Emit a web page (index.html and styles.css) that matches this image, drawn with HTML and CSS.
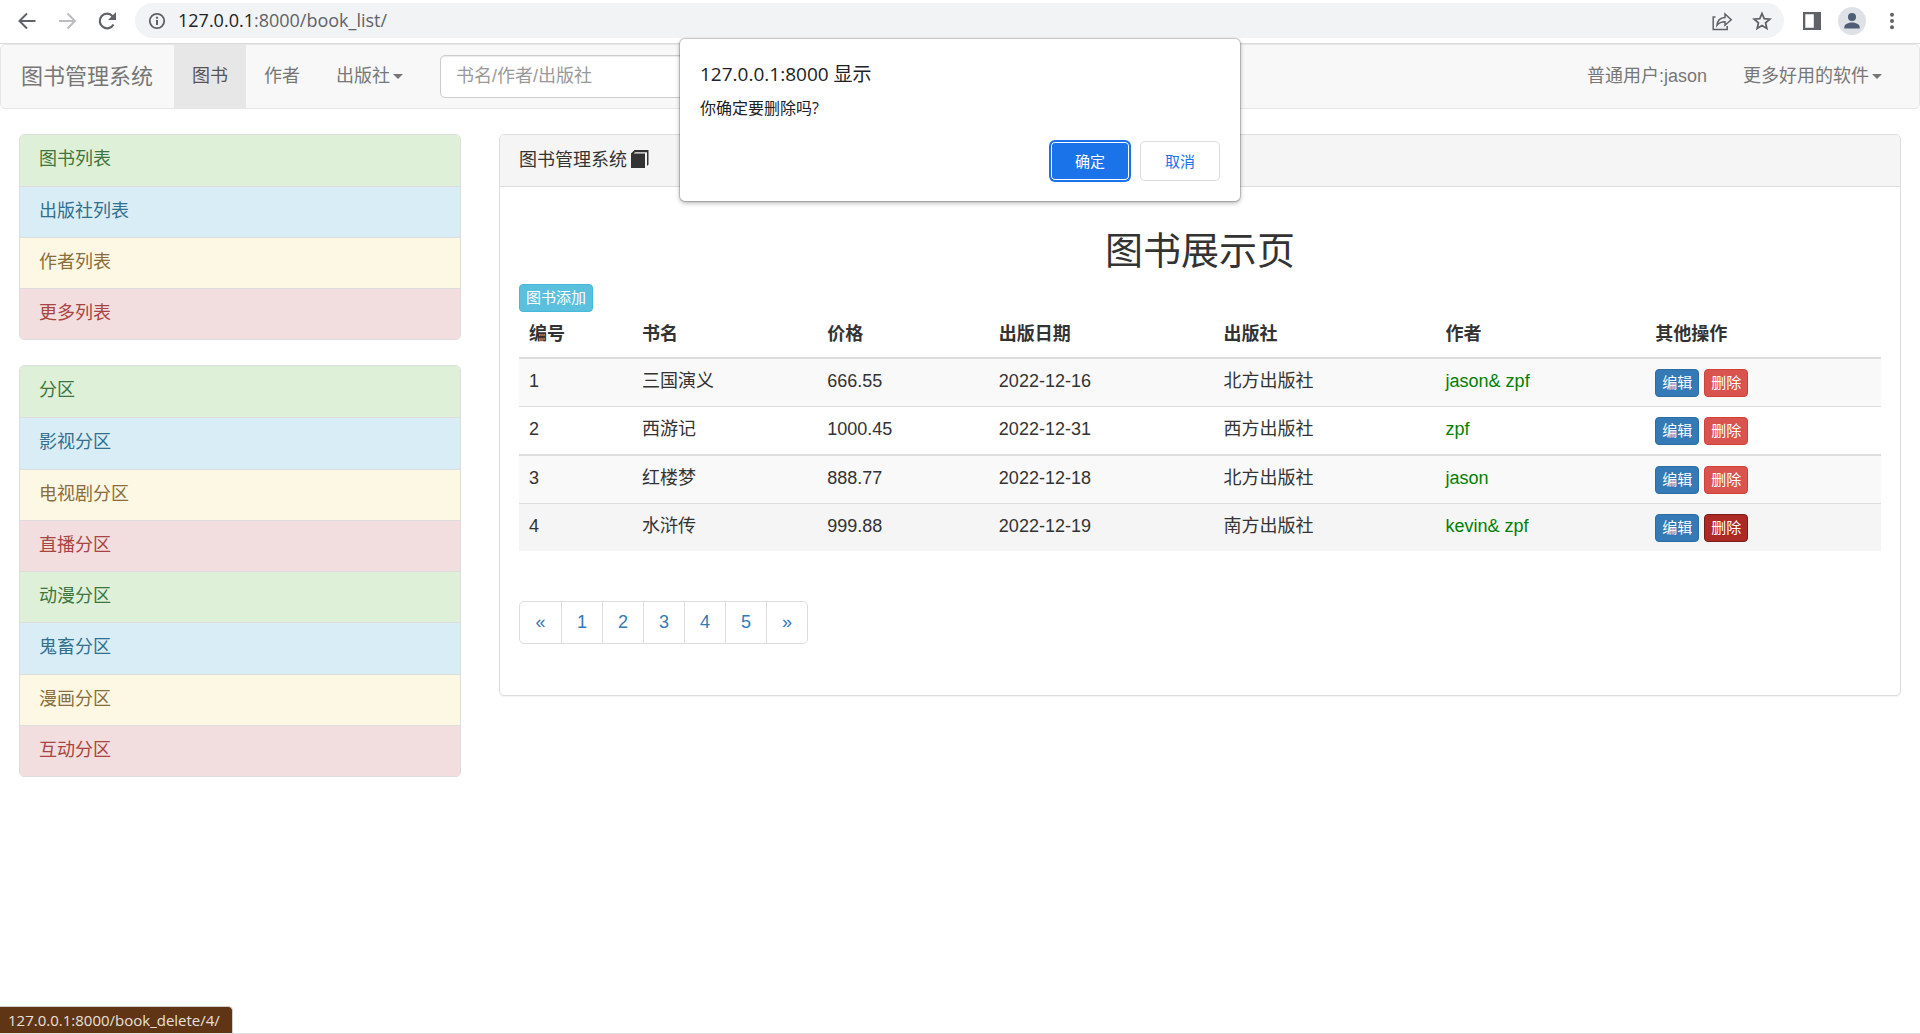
FILE: index.html
```html
<!DOCTYPE html>
<html lang="zh-CN">
<head>
<meta charset="utf-8">
<title>图书管理系统</title>
<link rel="stylesheet" href="styles.css">
</head>
<body>
<header class="toolbar">
  <button class="tool" aria-label="后退"><svg width="24" height="24" viewBox="0 0 24 24" fill="none" stroke="#5f6368" stroke-width="2"><path d="M20.500 12H5M12 4.500L4.500 12l7.500 7.500"/></svg></button>
  <button class="tool" aria-label="前进"><svg width="24" height="24" viewBox="0 0 24 24" fill="none" stroke="#babcbe" stroke-width="2"><path d="M4 12h15.500M12.500 4.500L20 12l-7.500 7.500"/></svg></button>
  <button class="tool" aria-label="刷新"><svg width="24" height="24" viewBox="0 0 24 24"><path d="M18.500 15.500A7.300 7.300 0 1 1 17.600 7.200" fill="none" stroke="#5f6368" stroke-width="2.200"/><path d="M21 3v8h-8z" fill="#5f6368"/></svg></button>
  <div class="omnibox">
    <svg width="18" height="18" viewBox="0 0 18 18"><circle cx="9" cy="9" r="7.200" fill="none" stroke="#5f6368" stroke-width="1.800"/><path d="M8 8h2v5H8zM8 4.800h2v2H8z" fill="#5f6368"/></svg>
    <span class="url"><span class="url-host">127.0.0.1</span>:8000/book_list/</span>
    <button class="tool" aria-label="分享"><svg width="24" height="24" viewBox="0 0 24 24" fill="none" stroke="#5f6368" stroke-width="1.500"><path d="M5.500 8H3.200v12.500h14V17"/><path d="M7 16.200c.5-5 3.200-7.400 8-7.700V5l6.200 5.800L15 16.200v-3.500c-3.500 0-6 1-8 3.500z"/></svg></button>
    <button class="tool" aria-label="收藏"><svg width="24" height="24" viewBox="0 0 24 24" fill="none" stroke="#5f6368" stroke-width="1.800"><path d="M12 4.500l2.200 5.200 5.600.5-4.200 3.700 1.200 5.500L12 16.500l-4.800 2.900 1.200-5.500-4.200-3.700 5.600-.5z"/></svg></button>
  </div>
  <div class="tools-end">
    <button class="tool" aria-label="侧边栏"><svg width="24" height="24" viewBox="0 0 24 24"><path d="M3 3h18v18H3zM5.300 5.300v13.400h8.500V5.300z" fill="#5f6368" fill-rule="evenodd"/></svg></button>
    <button class="tool" aria-label="用户"><svg width="28" height="28" viewBox="0 0 28 28"><circle cx="14" cy="14" r="14" fill="#dee1e6"/><circle cx="14" cy="10" r="4" fill="#4f5d75"/><path d="M6.300 21.500v-1.500c0-3 4.500-4.500 7.700-4.500s7.700 1.500 7.700 4.500v1.500z" fill="#4f5d75"/></svg></button>
    <button class="tool" aria-label="菜单"><svg width="24" height="24" viewBox="0 0 24 24" fill="#5f6368"><circle cx="12" cy="5.700" r="2"/><circle cx="12" cy="12" r="2"/><circle cx="12" cy="18.200" r="2"/></svg></button>
  </div>
</header>

<nav class="navbar">
  <a class="brand" href="#">图书管理系统</a>
  <a class="nav-link active" href="#">图书</a>
  <a class="nav-link" href="#">作者</a>
  <a class="nav-link" href="#">出版社<span class="caret"></span></a>
  <input class="search" type="text" placeholder="书名/作者/出版社" aria-label="搜索">
  <div class="nav-end">
    <a class="nav-link" href="#">普通用户:jason</a>
    <a class="nav-link" href="#">更多好用的软件<span class="caret"></span></a>
  </div>
</nav>

<div class="layout">
  <aside class="sidebar">
    <div class="list-group">
      <a class="item success" href="#">图书列表</a>
      <a class="item info" href="#">出版社列表</a>
      <a class="item warning" href="#">作者列表</a>
      <a class="item danger" href="#">更多列表</a>
    </div>
    <div class="list-group list-group-long">
      <a class="item success" href="#">分区</a>
      <a class="item info" href="#">影视分区</a>
      <a class="item warning" href="#">电视剧分区</a>
      <a class="item danger" href="#">直播分区</a>
      <a class="item success" href="#">动漫分区</a>
      <a class="item info" href="#">鬼畜分区</a>
      <a class="item warning" href="#">漫画分区</a>
      <a class="item danger" href="#">互动分区</a>
    </div>
  </aside>

  <main class="panel">
    <div class="panel-heading">图书管理系统
      <svg width="18" height="18" viewBox="0 0 18 18"><path d="M0 3.500L3.500 0H17.500V14.500L16 16V2.200H4L2.800 3.500H14V18H0z" fill="#333"/></svg>
    </div>
    <div class="panel-body">
      <h1 class="title">图书展示页</h1>
      <a class="btn btn-info" href="#">图书添加</a>
      <table class="table">
        <colgroup><col class="c-id"><col class="c-name"><col class="c-price"><col class="c-date"><col class="c-pub"><col class="c-author"><col></colgroup>
        <thead>
          <tr><th>编号</th><th>书名</th><th>价格</th><th>出版日期</th><th>出版社</th><th>作者</th><th>其他操作</th></tr>
        </thead>
        <tbody>
          <tr><td>1</td><td>三国演义</td><td>666.55</td><td>2022-12-16</td><td>北方出版社</td><td class="author">jason&amp; zpf</td><td><div class="actions"><a class="btn btn-primary" href="#">编辑</a><a class="btn btn-danger" href="#">删除</a></div></td></tr>
          <tr><td>2</td><td>西游记</td><td>1000.45</td><td>2022-12-31</td><td>西方出版社</td><td class="author">zpf</td><td><div class="actions"><a class="btn btn-primary" href="#">编辑</a><a class="btn btn-danger" href="#">删除</a></div></td></tr>
        </tbody>
        <tbody>
          <tr><td>3</td><td>红楼梦</td><td>888.77</td><td>2022-12-18</td><td>北方出版社</td><td class="author">jason</td><td><div class="actions"><a class="btn btn-primary" href="#">编辑</a><a class="btn btn-danger" href="#">删除</a></div></td></tr>
          <tr class="hovered"><td>4</td><td>水浒传</td><td>999.88</td><td>2022-12-19</td><td>南方出版社</td><td class="author">kevin&amp; zpf</td><td><div class="actions"><a class="btn btn-primary" href="#">编辑</a><a class="btn btn-danger pressed" href="#">删除</a></div></td></tr>
        </tbody>
      </table>
      <nav class="pagination" aria-label="分页">
        <a href="#">«</a><a href="#">1</a><a href="#">2</a><a href="#">3</a><a href="#">4</a><a href="#">5</a><a href="#">»</a>
      </nav>
    </div>
  </main>
</div>

<div class="dialog" role="alertdialog" aria-labelledby="dialog-title">
  <div class="dialog-title" id="dialog-title">127.0.0.1:8000 显示</div>
  <div class="dialog-text">你确定要删除吗?</div>
  <div class="dialog-actions">
    <button class="dialog-btn ok">确定</button>
    <button class="dialog-btn">取消</button>
  </div>
</div>

<div class="status">127.0.0.1:8000/book_delete/4/</div>
</body>
</html>
```
FILE: styles.css
```css
* { box-sizing: border-box; }

body {
  margin: 0;
  min-height: 100vh;
  position: relative;
  border-bottom: 1px solid #ddd;
  background: #fff;
  color: #333;
  font: 400 18px/25px "Liberation Sans", "Noto Sans CJK SC", sans-serif;
}

a { color: inherit; text-decoration: none; }

/* Browser toolbar */
.toolbar {
  display: flex;
  align-items: center;
  gap: 16px;
  padding: 3px 16px 5px 15px;
  border-bottom: 1px solid #d8dadb;
}
.tool {
  display: flex;
  padding: 0;
  border: 0;
  background: none;
}
.omnibox {
  flex: 1;
  display: flex;
  align-items: center;
  gap: 16px;
  height: 35px;
  padding: 0 10px 0 13px;
  border-radius: 18px;
  background: #f1f3f4;
}
.url {
  flex: 1;
  margin-left: -4px;
  color: #5f6368;
  font: 400 18px/25px "Open Sans", sans-serif;
}
.url-host { color: #202124; }
.tools-end {
  display: flex;
  align-items: center;
  gap: 14px;
}

/* Site navigation */
.navbar {
  display: flex;
  align-items: center;
  padding-right: 19px;
  border: 1px solid #e7e7e7;
  border-radius: 5px;
  background: #f8f8f8;
  color: #777;
}
.brand {
  padding: 19px 21px 19px 20px;
  font-size: 22px;
}
.nav-link {
  display: flex;
  align-items: center;
  padding: 19px 18px;
}
.nav-link.active {
  background: #e7e7e7;
  color: #555;
}
.caret {
  margin-left: 3px;
  border: 5px solid transparent;
  border-top-color: currentColor;
  border-bottom: 0;
}
.search {
  width: 250px;
  height: 43px;
  margin-left: 19px;
  padding: 8px 15px;
  border: 1px solid #ccc;
  border-radius: 5px;
  box-shadow: inset 0 1px 1px rgba(0, 0, 0, .08);
  font: inherit;
}
.search::placeholder { color: #999; }
.nav-end {
  display: flex;
  margin-left: auto;
}

/* Page columns */
.layout {
  display: grid;
  grid-template-columns: 1fr 3fr;
  align-items: start;
  padding-top: 25px;
}
.sidebar {
  display: grid;
  gap: 25px;
  padding: 0 19px;
}
.list-group {
  display: grid;
  grid-auto-rows: 1fr;
  min-height: 206px;
  overflow: hidden;
  border: 1px solid #ddd;
  border-radius: 5px;
}
.list-group-long { min-height: 412px; }
.item { padding: 12px 19px; }
.item + .item { border-top: 1px solid #ddd; }
.success { background: #dff0d8; color: #3c763d; }
.info { background: #d9edf7; color: #31708f; }
.warning { background: #fcf8e3; color: #8a6d3b; }
.danger { background: #f2dede; color: #a94442; }

.panel {
  margin: 0 19px;
  border: 1px solid #ddd;
  border-radius: 5px;
  box-shadow: 0 1px 1px rgba(0, 0, 0, .05);
}
.panel-heading {
  display: flex;
  align-items: center;
  gap: 4px;
  padding: 13px 19px;
  border-bottom: 1px solid #ddd;
  border-radius: 4px 4px 0 0;
  background: #f5f5f5;
}
.panel-heading svg { margin-bottom: 3px; }
.panel-body { padding: 19px 19px 51px; }
.title {
  margin: 25px 0 12px;
  font-size: 38px;
  font-weight: 400;
  line-height: 41px;
  text-align: center;
}

.btn {
  display: block;
  width: fit-content;
  padding: 2px 6px;
  border: 1px solid;
  border-radius: 4px;
  color: #fff;
  font-size: 15px;
  line-height: 22px;
}
.btn-info { background: #5bc0de; border-color: #46b8da; }
.btn-primary { background: #337ab7; border-color: #2e6da4; }
.btn-danger { background: #d9534f; border-color: #d43f3a; }
.btn-danger.pressed { background: #ac2925; border-color: #761c19; }

.table {
  width: 100%;
  margin-bottom: 50px;
  border-spacing: 0;
  table-layout: fixed;
}
.c-id { width: 8.3%; }
.c-name { width: 13.6%; }
.c-price { width: 12.6%; }
.c-date { width: 16.5%; }
.c-pub { width: 16.3%; }
.c-author { width: 15.4%; }
th {
  padding: 10px;
  border-bottom: 2px solid #ddd;
  font-weight: 700;
  text-align: left;
}
td {
  padding: 10px 10px 9px;
  vertical-align: top;
}
tr:nth-child(even) td { border-top: 1px solid #ddd; }
tbody + tbody tr:first-child td { border-top: 2px solid #ddd; }
tbody tr:nth-child(odd) { background: #f9f9f9; }
tbody tr.hovered { background: #f5f5f5; }
.author { color: #008000; }
.actions {
  display: flex;
  gap: 5px;
}

.pagination {
  display: flex;
  width: fit-content;
  border: 1px solid #ddd;
  border-radius: 5px;
  color: #337ab7;
}
.pagination a {
  width: 41px;
  padding: 8px 0;
  text-align: center;
}
.pagination a + a { border-left: 1px solid #ddd; }

/* Confirm dialog */
.dialog {
  position: absolute;
  top: 39px;
  left: 50%;
  width: 560px;
  margin-left: -280px;
  padding: 20px;
  border-radius: 5px;
  background: #fff;
  box-shadow: 0 0 1px 1px rgba(0, 0, 0, .2), 0 2px 5px rgba(0, 0, 0, .3);
  color: #202124;
  font-family: "Open Sans", "Noto Sans CJK SC", sans-serif;
}
.dialog-title {
  font-size: 19px;
  line-height: 30px;
}
.dialog-text {
  padding: 8px 0 21px;
  font-size: 16px;
  line-height: 23px;
}
.dialog-actions {
  display: flex;
  justify-content: flex-end;
  gap: 10px;
}
.dialog-btn {
  width: 80px;
  height: 40px;
  padding: 0;
  border: 1px solid #dadce0;
  border-radius: 5px;
  background: #fff;
  color: #1a73e8;
  font: 400 15px/22px "Noto Sans CJK SC", sans-serif;
}
.dialog-btn.ok {
  border-color: #1a73e8;
  background: #1a73e8;
  box-shadow: 0 0 0 1px #1a73e8, inset 0 0 0 1px #fff;
  color: #fff;
}

/* Link target shown by the browser */
.status {
  position: absolute;
  bottom: 0;
  left: 0;
  padding: 3px 12px 2px 8px;
  border-top: 1px solid #d5cdc7;
  border-right: 1px solid #d5cdc7;
  border-top-right-radius: 5px;
  background: #5f3515;
  color: #e8e0da;
  font: 400 15px/21px "Open Sans", sans-serif;
}
```
